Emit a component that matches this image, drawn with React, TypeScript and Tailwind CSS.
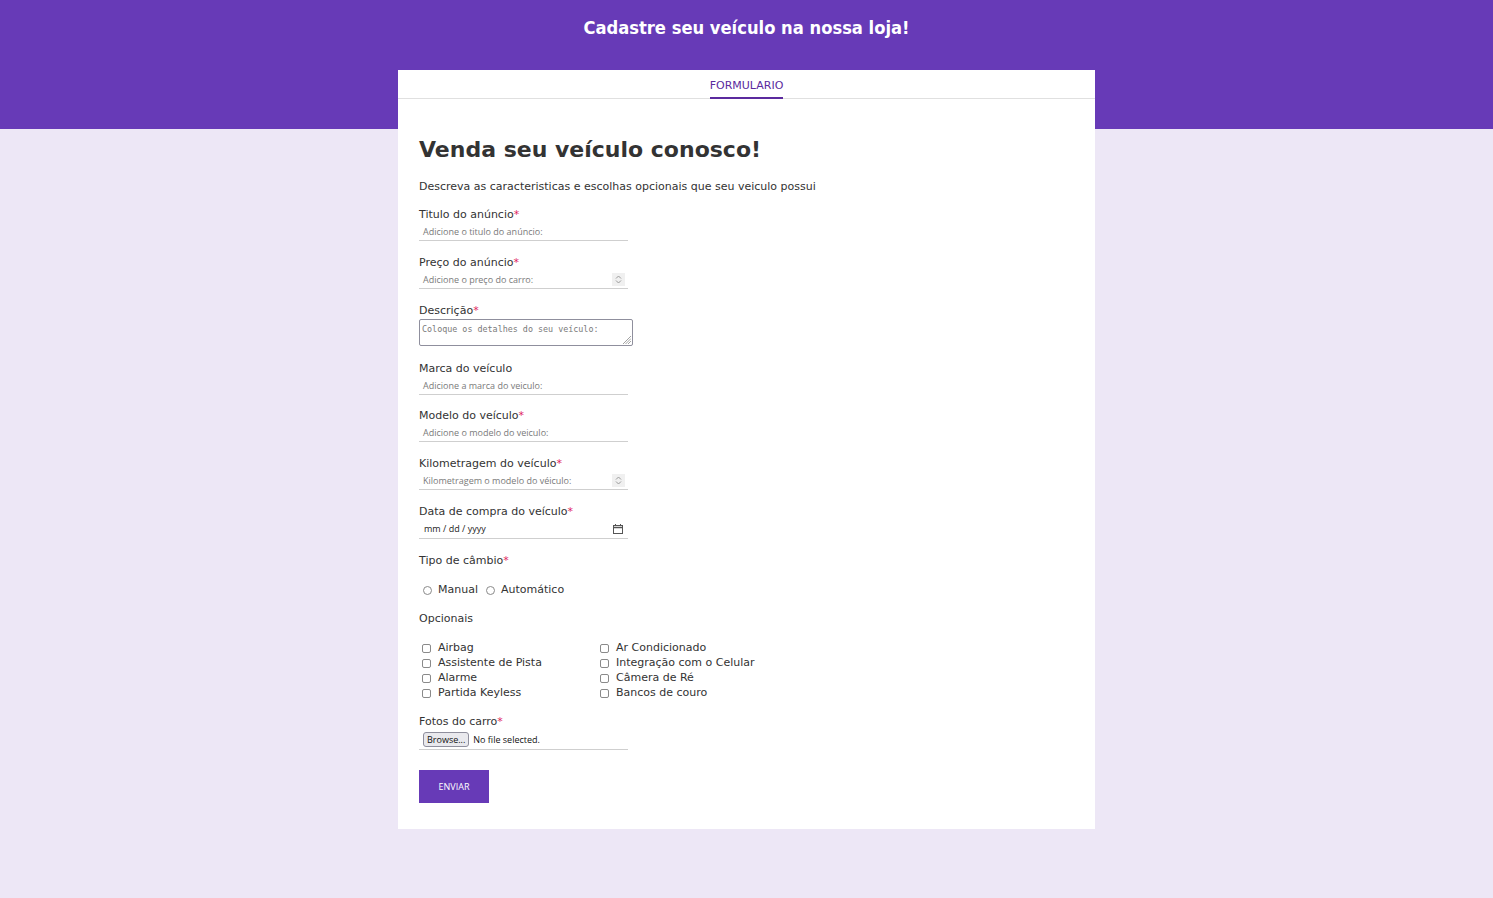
import React from "react";

const FONT = { fontFamily: '"DejaVu Sans", Verdana, sans-serif' };
const PH = { fontFamily: '"Open Sans", "Noto Sans", sans-serif' };

function Star() {
  return <span className="text-[#e0245e]">*</span>;
}

function Label({ text, req }: { text: string; req?: boolean }) {
  return (
    <div className="h-[16px] leading-[16px] text-[11px] text-[#333]">
      {text}
      {req && <Star />}
    </div>
  );
}

function Spinner() {
  return (
    <div className="w-[13px] h-[13px] bg-[#f0f0f0] flex items-center justify-center">
      <svg width="7" height="9" viewBox="0 0 7 9" fill="none" stroke="#9a9a9a" strokeWidth="1">
        <path d="M1 3.5 L3.5 1 L6 3.5" />
        <path d="M1 5.5 L3.5 8 L6 5.5" />
      </svg>
    </div>
  );
}

function TextField({ label, req, ph, spin }: { label: string; req?: boolean; ph: string; spin?: boolean }) {
  return (
    <div className="mb-[14px]">
      <Label text={label} req={req} />
      <div className="w-[209px] h-[18px] border-b border-[#cfcfcf] flex items-center justify-between pl-[4px] pr-[3px]">
        <span className="text-[9px] text-[#7a7a7a]" style={PH}>{ph}</span>
        {spin && <Spinner />}
      </div>
    </div>
  );
}

function Box({ round }: { round?: boolean }) {
  return (
    <span
      className={`inline-block w-[9px] h-[9px] border border-[#8a8a8a] bg-white ${round ? "rounded-full" : "rounded-[2px]"}`}
    />
  );
}

function Check({ text }: { text: string }) {
  return (
    <div className="h-[15px] flex items-center gap-[7px] text-[11px] text-[#333]">
      <Box />
      <span>{text}</span>
    </div>
  );
}

export default function App() {
  return (
    <div className="min-h-[898px] bg-[#ede7f6] relative" style={FONT}>
      <div className="h-[129px] bg-[#673ab7]">
        <div className="h-[55px] flex items-center justify-center">
          <h1
            className="text-white text-[18.2px] font-bold"
            style={{ fontFamily: '"DejaVu Sans Condensed", "DejaVu Sans", sans-serif', fontStretch: "condensed" }}
          >
            Cadastre seu veículo na nossa loja!
          </h1>
        </div>
      </div>
      <div className="absolute left-[398px] top-[70px] w-[697px] bg-white pb-[26px]">
        <div className="h-[29px] border-b border-[#e0e0e0] flex justify-center">
          <div className="h-[29px] flex items-end pb-[3px] text-[11px] text-[#5b2a9e] border-b-2 border-[#5b2a9e]">
            FORMULARIO
          </div>
        </div>
        <div className="pl-[21px] pt-[37px]">
          <h2 className="text-[22px] leading-[28px] font-bold text-[#333]">Venda seu veículo conosco!</h2>
          <p className="mt-[15px] text-[11px] leading-[16px] text-[#333]">
            Descreva as caracteristicas e escolhas opcionais que seu veiculo possui
          </p>
          <div className="mt-[12px]">
            <TextField label="Titulo do anúncio" req ph="Adicione o titulo do anúncio:" />
            <TextField label="Preço do anúncio" req ph="Adicione o preço do carro:" spin />
            <div className="mb-[15px]">
              <Label text="Descrição" req />
              <div className="w-[214px] h-[27px] border border-[#8f8f9d] rounded-[2px] relative px-[2px] pt-[4px]">
                <span className="text-[8.4px] text-[#7a7a7a] block leading-[10px]" style={{ fontFamily: '"DejaVu Sans Mono", monospace' }}>
                  Coloque os detalhes do seu veículo:
                </span>
                <svg className="absolute right-[1px] bottom-[1px]" width="9" height="9" viewBox="0 0 9 9" stroke="#8a8a8a" strokeWidth="0.8">
                  <path d="M9 1 L1 9 M9 3.5 L3.5 9 M9 6 L6 9" />
                </svg>
              </div>
            </div>
            <TextField label="Marca do veículo" ph="Adicione a marca do veiculo:" />
            <div className="-mt-[1px]">
              <TextField label="Modelo do veículo" req ph="Adicione o modelo do veiculo:" />
            </div>
            <TextField label="Kilometragem do veículo" req ph="Kilometragem o modelo do véiculo:" spin />
            <div className="mb-[14px]">
              <Label text="Data de compra do veículo" req />
              <div className="w-[209px] h-[19px] border-b border-[#cfcfcf] flex items-center justify-between pl-[5px] pr-[5px]">
                <span className="text-[9px] text-[#222]" style={PH}>mm / dd / yyyy</span>
                <svg width="10" height="10" viewBox="0 0 10 10" fill="none" stroke="#555" strokeWidth="1">
                  <rect x="0.5" y="1.5" width="9" height="8" />
                  <path d="M0.5 3.5 H9.5" strokeWidth="1.5" />
                  <path d="M2.5 0 V2 M7.5 0 V2" />
                </svg>
              </div>
            </div>
            <Label text="Tipo de câmbio" req />
            <div className="mt-[13px] h-[16px] flex items-center text-[11px] text-[#333]">
              <span className="ml-[4px] mr-[6px] flex"><Box round /></span>
              <span>Manual</span>
              <span className="ml-[8px] mr-[6px] flex"><Box round /></span>
              <span>Automático</span>
            </div>
            <div className="mt-[13px]">
              <Label text="Opcionais" />
            </div>
            <div className="mt-[14px] flex pl-[3px]">
              <div className="w-[178px]">
                <Check text="Airbag" />
                <Check text="Assistente de Pista" />
                <Check text="Alarme" />
                <Check text="Partida Keyless" />
              </div>
              <div>
                <Check text="Ar Condicionado" />
                <Check text="Integração com o Celular" />
                <Check text="Câmera de Ré" />
                <Check text="Bancos de couro" />
              </div>
            </div>
            <div className="mt-[13px]">
              <Label text="Fotos do carro" req />
              <div className="w-[209px] h-[20px] border-b border-[#cfcfcf] flex items-center pl-[4px]">
                <span
                  className="h-[15px] px-[3px] flex items-center text-[9px] text-[#111] bg-[#e9e9ed] border border-[#8f8f9d] rounded-[3px]"
                  style={PH}
                >
                  Browse...
                </span>
                <span className="ml-[4px] text-[9px] text-[#111]" style={PH}>No file selected.</span>
              </div>
            </div>
            <button className="mt-[20px] w-[70px] h-[33px] bg-[#673ab7] text-white text-[9px]" style={PH}>
              ENVIAR
            </button>
          </div>
        </div>
      </div>
    </div>
  );
}
